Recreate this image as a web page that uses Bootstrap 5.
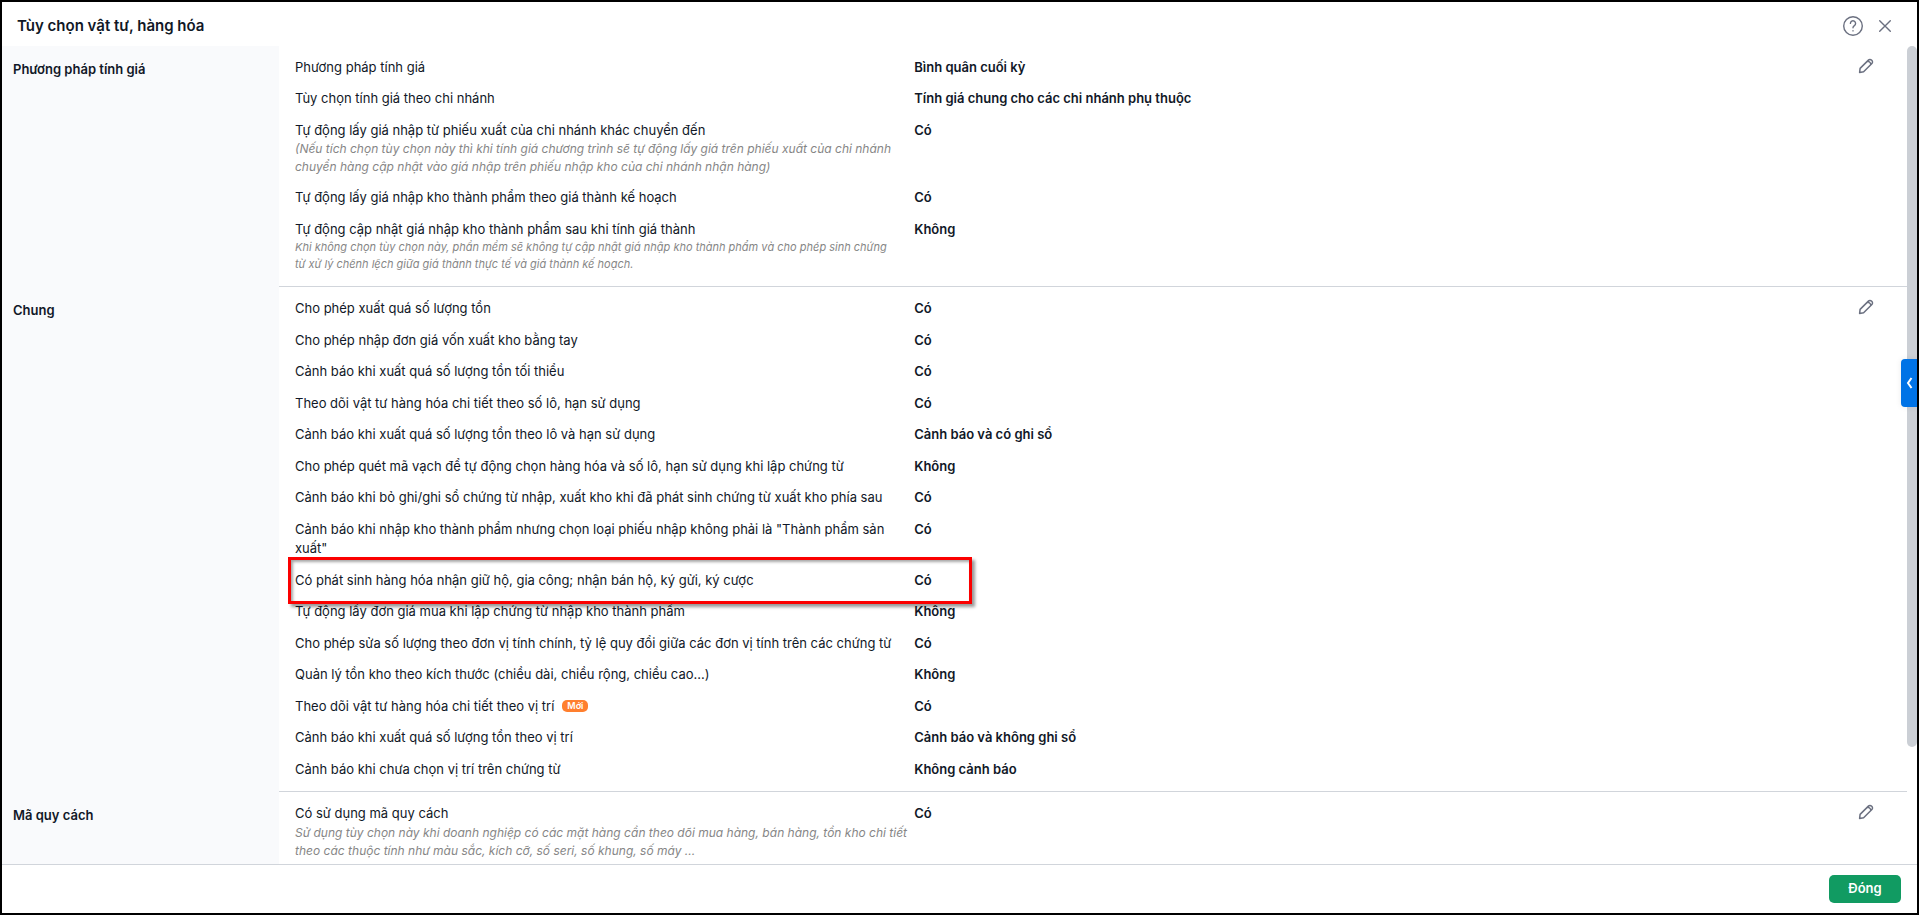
<!DOCTYPE html>
<html lang="vi">
<head>
<meta charset="utf-8">
<meta name="viewport" content="width=device-width, initial-scale=1">
<title>Tùy chọn vật tư, hàng hóa</title>
<link href="https://cdn.jsdelivr.net/npm/bootstrap@5.3.0/dist/css/bootstrap.min.css" rel="stylesheet">
<style>
  body { font-family: Inter, "Liberation Sans", sans-serif; font-size: 13px; color: #111827; background: #fff; }
  .option-window { border: 2px solid #000; }
  .window-head { height: 44px; padding: 5px 24px 0 15px; }
  .head-tools { gap: 13px; }
  .window-title { font-size: 15px; font-weight: 600; }
  .icon-btn { border: 0; background: none; padding: 0; color: #6b7080; line-height: 0; }
  .icon-btn svg { fill: none; stroke: currentColor; stroke-linecap: round; stroke-linejoin: round; display: block; }
  .option-main { min-height: 0; }
  .option-scroll { overflow-y: auto; scrollbar-width: none; min-height: 0; }
  .option-scroll::-webkit-scrollbar { display: none; }
  .section-name { flex: 0 0 277px; background: #f9fafc; padding: 14px 11px; }
  .section-name h2 { font-size: 13px; font-weight: 600; line-height: 1.5; margin: 0; }
  .section-body { padding: 12px 16px 0; border-bottom: 1px solid #d1d5db; }
  .option-section:last-child .section-body { border-bottom: 0; }
  .option-line { display: grid; grid-template-columns: 38.8% 1fr; margin-bottom: 12px; }
  .option-line dt { font-weight: 400; padding-right: 4px; }
  .option-line dd { font-weight: 600; margin: 0; }
  .hint { font-style: italic; color: #868686; font-size: 12px; line-height: 18px; }
  .hint-sm { font-size: 11px; line-height: 17px; padding: 0 16px 1px 0; }
  .edit-btn { top: 12px; right: 33px; }
  .new-badge { font-size: 9px; line-height: 12px; height: 12px; padding: 0 5px; border-radius: 5px; background: #ff7f2e; font-weight: 600; }
  .marker { top: -14px; bottom: -14px; left: -7px; width: calc(38.8% + 65px); border: 3px solid #fb0000; box-shadow: 3px 3px 3px rgba(0,0,0,.4), inset 2px 2px 3px rgba(0,0,0,.35); pointer-events: none; z-index: 1; }
  .scroll-track { flex: 0 0 10px; }
  .scroll-thumb { height: 85.7%; background: #cbcfd5; border-radius: 5px; }
  .side-tab { top: 313px; right: 0; width: 16px; height: 48px; padding: 0 0 0 2px; border: 0; border-radius: 4px 0 0 4px; background: #0073e6; color: #fff; box-shadow: 0 0 6px rgba(0,0,0,.08); }
  .side-tab svg { fill: none; stroke: #fff; stroke-width: 2; display: block; margin: auto; }
  .window-foot { height: 49px; padding: 0 16px; border-top: 1px solid #d1d5db; }
  .close-btn { width: 72px; height: 28px; padding: 0; border-radius: 5px; font-size: 13px; font-weight: 600; color: #fff; background: #119b62; }
  .close-btn:hover { color: #fff; background: #0d8453; }
</style>
</head>
<body>
<svg class="d-none" aria-hidden="true">
  <symbol id="pencil" viewBox="0 0 16 16"><path d="M1.600 14.400l.5-4 8.300-8.300a2.100 2.100 0 0 1 1.500-.6c.7 0 1.300.2 1.800.7s.8 1.100.8 1.800a2.100 2.100 0 0 1-.6 1.500l-8.300 8.300zM9.400 3.200c1.800 0 3.400 1.500 3.400 3.400"/></symbol>
</svg>
<div class="option-window vh-100 d-flex flex-column">
  <header class="window-head d-flex align-items-center justify-content-between">
    <h1 class="window-title mb-0">Tùy chọn vật tư, hàng hóa</h1>
    <div class="head-tools d-flex align-items-center">
      <button type="button" class="icon-btn" aria-label="Trợ giúp"><svg width="22" height="22" viewBox="0 0 22 22" stroke-width="1.400"><circle cx="11" cy="11" r="9.300"/><path d="M8.400 8.400a2.600 2.600 0 1 1 4 2.200c-.9.600-1.400 1-1.400 2.100M11 15.800v.1"/></svg></button>
      <button type="button" class="icon-btn" aria-label="Đóng cửa sổ"><svg width="16" height="16" viewBox="0 0 16 16" stroke-width="1.400"><path d="M2.700 2.700l10.600 10.600M13.300 2.700L2.700 13.300"/></svg></button>
    </div>
  </header>

  <main class="option-main d-flex flex-fill position-relative">
    <div class="option-scroll flex-fill">
      <section class="option-section d-flex">
        <div class="section-name"><h2>Phương pháp tính giá</h2></div>
        <div class="section-body flex-fill position-relative">
          <button type="button" class="icon-btn edit-btn position-absolute" aria-label="Sửa"><svg width="16" height="16" stroke-width="1.500"><use href="#pencil"/></svg></button>
          <dl class="mb-0">
            <div class="option-line"><dt>Phương pháp tính giá</dt><dd>Bình quân cuối kỳ</dd></div>
            <div class="option-line"><dt>Tùy chọn tính giá theo chi nhánh</dt><dd>Tính giá chung cho các chi nhánh phụ thuộc</dd></div>
            <div class="option-line"><dt>Tự động lấy giá nhập từ phiếu xuất của chi nhánh khác chuyển đến<div class="hint">(Nếu tích chọn tùy chọn này thì khi tính giá chương trình sẽ tự động lấy giá trên phiếu xuất của chi nhánh chuyển hàng cập nhật vào giá nhập trên phiếu nhập kho của chi nhánh nhận hàng)</div></dt><dd>Có</dd></div>
            <div class="option-line"><dt>Tự động lấy giá nhập kho thành phẩm theo giá thành kế hoạch</dt><dd>Có</dd></div>
            <div class="option-line"><dt>Tự động cập nhật giá nhập kho thành phẩm sau khi tính giá thành<div class="hint hint-sm">Khi không chọn tùy chọn này, phần mềm sẽ không tự cập nhật giá nhập kho thành phẩm và cho phép sinh chứng từ xử lý chênh lệch giữa giá thành thực tế và giá thành kế hoạch.</div></dt><dd>Không</dd></div>
          </dl>
        </div>
      </section>

      <section class="option-section d-flex">
        <div class="section-name"><h2>Chung</h2></div>
        <div class="section-body flex-fill position-relative">
          <button type="button" class="icon-btn edit-btn position-absolute" aria-label="Sửa"><svg width="16" height="16" stroke-width="1.500"><use href="#pencil"/></svg></button>
          <dl class="mb-0">
            <div class="option-line"><dt>Cho phép xuất quá số lượng tồn</dt><dd>Có</dd></div>
            <div class="option-line"><dt>Cho phép nhập đơn giá vốn xuất kho bằng tay</dt><dd>Có</dd></div>
            <div class="option-line"><dt>Cảnh báo khi xuất quá số lượng tồn tối thiểu</dt><dd>Có</dd></div>
            <div class="option-line"><dt>Theo dõi vật tư hàng hóa chi tiết theo số lô, hạn sử dụng</dt><dd>Có</dd></div>
            <div class="option-line"><dt>Cảnh báo khi xuất quá số lượng tồn theo lô và hạn sử dụng</dt><dd>Cảnh báo và có ghi sổ</dd></div>
            <div class="option-line"><dt>Cho phép quét mã vạch để tự động chọn hàng hóa và số lô, hạn sử dụng khi lập chứng từ</dt><dd>Không</dd></div>
            <div class="option-line"><dt>Cảnh báo khi bỏ ghi/ghi sổ chứng từ nhập, xuất kho khi đã phát sinh chứng từ xuất kho phía sau</dt><dd>Có</dd></div>
            <div class="option-line"><dt>Cảnh báo khi nhập kho thành phẩm nhưng chọn loại phiếu nhập không phải là "Thành phẩm sản xuất"</dt><dd>Có</dd></div>
            <div class="option-line position-relative"><dt>Có phát sinh hàng hóa nhận giữ hộ, gia công; nhận bán hộ, ký gửi, ký cược</dt><dd>Có<span class="marker position-absolute"></span></dd></div>
            <div class="option-line"><dt>Tự động lấy đơn giá mua khi lập chứng từ nhập kho thành phẩm</dt><dd>Không</dd></div>
            <div class="option-line"><dt>Cho phép sửa số lượng theo đơn vị tính chính, tỷ lệ quy đổi giữa các đơn vị tính trên các chứng từ</dt><dd>Có</dd></div>
            <div class="option-line"><dt>Quản lý tồn kho theo kích thước (chiều dài, chiều rộng, chiều cao...)</dt><dd>Không</dd></div>
            <div class="option-line"><dt class="d-flex align-items-center gap-2">Theo dõi vật tư hàng hóa chi tiết theo vị trí <span class="badge new-badge">Mới</span></dt><dd>Có</dd></div>
            <div class="option-line"><dt>Cảnh báo khi xuất quá số lượng tồn theo vị trí</dt><dd>Cảnh báo và không ghi sổ</dd></div>
            <div class="option-line"><dt>Cảnh báo khi chưa chọn vị trí trên chứng từ</dt><dd>Không cảnh báo</dd></div>
          </dl>
        </div>
      </section>

      <section class="option-section d-flex">
        <div class="section-name"><h2>Mã quy cách</h2></div>
        <div class="section-body flex-fill position-relative">
          <button type="button" class="icon-btn edit-btn position-absolute" aria-label="Sửa"><svg width="16" height="16" stroke-width="1.500"><use href="#pencil"/></svg></button>
          <dl class="mb-0">
            <div class="option-line"><dt>Có sử dụng mã quy cách<div class="hint">Sử dụng tùy chọn này khi doanh nghiệp có các mặt hàng cần theo dõi mua hàng, bán hàng, tồn kho chi tiết theo các thuộc tính như màu sắc, kích cỡ, số seri, số khung, số máy ...</div></dt><dd>Có</dd></div>
          </dl>
        </div>
      </section>
    </div>
    <div class="scroll-track"><div class="scroll-thumb"></div></div>
    <button type="button" class="side-tab position-absolute" aria-label="Mở bảng bên"><svg width="8" height="12" viewBox="0 0 8 12"><path d="M5.500 1L2 6l3.500 5"/></svg></button>
  </main>

  <footer class="window-foot d-flex align-items-center justify-content-end">
    <button type="button" class="btn close-btn">Đóng</button>
  </footer>
</div>
<script src="https://cdn.jsdelivr.net/npm/bootstrap@5.3.0/dist/js/bootstrap.bundle.min.js"></script>
</body>
</html>
